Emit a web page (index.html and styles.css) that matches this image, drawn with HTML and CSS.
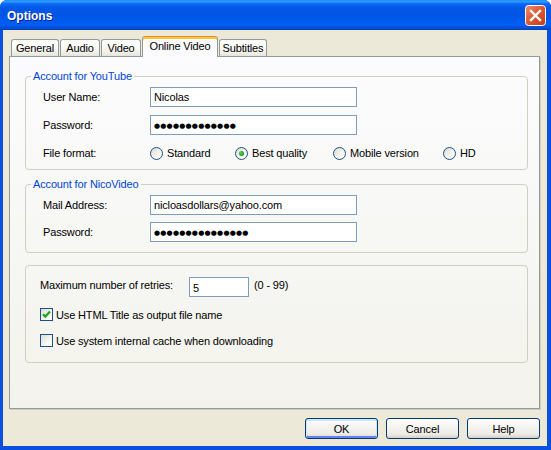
FILE: index.html
```html
<!DOCTYPE html>
<html>
<head>
<meta charset="utf-8">
<title>Options</title>
<link rel="stylesheet" href="styles.css">
</head>
<body>
<div class="window">
  <div class="titlebar">
    <span class="title">Options</span>
    <span class="close" aria-label="Close">
      <svg width="21" height="21" viewBox="0 0 21 21">
        <defs>
          <linearGradient id="cg" x1="0" y1="0" x2="1" y2="1">
            <stop offset="0" stop-color="#F08E70"/>
            <stop offset="0.45" stop-color="#E15A36"/>
            <stop offset="1" stop-color="#C2391A"/>
          </linearGradient>
        </defs>
        <rect x="0.5" y="0.5" width="20" height="20" rx="3" fill="url(#cg)" stroke="#ffffff"/>
        <path d="M6 6 L15 15 M15 6 L6 15" stroke="#ffffff" stroke-width="2.4" stroke-linecap="square"/>
      </svg>
    </span>
  </div>
  <div class="frame">
    <div class="tabs">
      <div class="tab">General</div>
      <div class="tab">Audio</div>
      <div class="tab">Video</div>
      <div class="tab active">Online Video</div>
      <div class="tab">Subtitles</div>
    </div>
    <div class="panel">
      <fieldset class="group g1">
        <legend>Account for YouTube</legend>
        <div class="form">
          <label class="lbl">User Name:</label>
          <div class="field">Nicolas</div>
          <label class="lbl">Password:</label>
          <div class="field pw">●●●●●●●●●●●●●</div>
          <label class="lbl">File format:</label>
          <div class="radios">
            <span class="radio"><i class="rb"></i>Standard</span>
            <span class="radio"><i class="rb on"></i>Best quality</span>
            <span class="radio"><i class="rb"></i>Mobile version</span>
            <span class="radio"><i class="rb"></i>HD</span>
          </div>
        </div>
      </fieldset>
      <fieldset class="group g2">
        <legend>Account for NicoVideo</legend>
        <div class="form">
          <label class="lbl">Mail Address:</label>
          <div class="field">nicloasdollars@yahoo.com</div>
          <label class="lbl">Password:</label>
          <div class="field pw">●●●●●●●●●●●●●●●</div>
        </div>
      </fieldset>
      <fieldset class="group g3">
        <div class="retries">
          <label class="rlbl">Maximum number of retries:</label>
          <div class="field small">5</div>
          <span class="range">(0 - 99)</span>
        </div>
        <div class="check">
          <i class="cb"><svg width="11" height="11" viewBox="0 0 11 11"><path d="M2 5.2 L4.3 7.6 L9 2.6" fill="none" stroke="#21A121" stroke-width="2.2"/></svg></i>
          <span>Use HTML Title as output file name</span>
        </div>
        <div class="check">
          <i class="cb"></i>
          <span>Use system internal cache when downloading</span>
        </div>
      </fieldset>
    </div>
    <div class="buttons">
      <button class="btn default">OK</button>
      <button class="btn">Cancel</button>
      <button class="btn">Help</button>
    </div>
  </div>
</div>
</body>
</html>
```
FILE: styles.css
```css
* { box-sizing: border-box; }
html, body { margin: 0; padding: 0; background: #ffffff; }
body {
  width: 551px;
  height: 450px;
  overflow: hidden;
  font-family: "Liberation Sans", Arial, sans-serif;
  font-size: 11px;
  letter-spacing: -0.15px;
  color: #000;
}
.window {
  width: 551px;
  height: 450px;
  display: flex;
  flex-direction: column;
  border-radius: 7px 7px 0 0;
  overflow: hidden;
  background: #0B4FE0;
}
.titlebar {
  height: 30px;
  flex: none;
  display: flex;
  align-items: center;
  justify-content: space-between;
  padding: 0 5px 0 7px;
  background: linear-gradient(180deg, #0997FF 0%, #3D95FF 6%, #0A6CF8 12%, #0458E8 24%, #0055E5 50%, #005AF0 70%, #0260F4 82%, #0050DA 92%, #0040B8 100%);
}
.title {
  color: #ffffff;
  font-weight: bold;
  font-size: 12px;
  letter-spacing: 0;
  text-shadow: 1px 1px 0 #0A1E8A;
  margin-top: 1px;
}
.close {
  width: 21px;
  height: 21px;
  display: block;
  margin-top: 1px;
}
.close svg { display: block; }
.frame {
  flex: 1;
  display: flex;
  flex-direction: column;
  background: #ECE9D8;
  border-style: solid;
  border-color: #0B4FE0;
  border-width: 0 4px 4px 3px;
  padding: 6px 7px 0 6px;
}
.tabs {
  height: 20px;
  display: grid;
  grid-template-columns: 48px 40px 40px 76px 48px;
  column-gap: 1px;
  align-items: end;
  padding-left: 2px;
  position: relative;
  z-index: 1;
}
.tab {
  height: 17px;
  border: 1px solid #919B9C;
  border-bottom: none;
  border-radius: 3px 3px 0 0;
  background: linear-gradient(180deg, #FFFFFF 0%, #FBFBF9 40%, #EFEEE8 80%, #E6E4DA 100%);
  display: flex;
  align-items: center;
  justify-content: center;
  white-space: nowrap;
  padding-bottom: 1px;
}
.tab.active {
  height: 21px;
  margin-bottom: -1px;
  background: #FCFCFE;
  border-top: 1px solid #E68B2C;
  box-shadow: inset 0 2px 0 #FFC83C;
  padding-top: 2px;
  padding-bottom: 4px;
}
.panel {
  height: 353px;
  flex: none;
  border: 1px solid #919B9C;
  box-shadow: 1px 1px 0 #D0CEC0;
  background: linear-gradient(180deg, #FCFCFE 0%, #F7F7F4 50%, #F3F2EC 100%);
  padding: 13px 11px 0 15px;
  display: flex;
  flex-direction: column;
}
.group {
  margin: 0;
  border: 1px solid #D0D0BF;
  border-radius: 4px;
  padding: 4px 0 6px 0;
  min-width: 0;
}
.group legend {
  margin-left: 5px;
  padding: 0 2px;
  color: #0046D5;
  line-height: 13px;
  font-size: 11px;
}
.g2 { margin-top: 8px; padding-bottom: 10px; }
.g3 { margin-top: 12px; padding: 11px 0 13px 14px; }
.form {
  display: grid;
  grid-template-columns: 107px 1fr;
  grid-auto-rows: 20px;
  row-gap: 8px;
  align-items: center;
  padding-left: 17px;
}
.g2 .form { row-gap: 7px; }
.lbl { white-space: nowrap; }
.field {
  width: 207px;
  height: 20px;
  border: 1px solid #7F9DB9;
  background: #ffffff;
  padding: 0 3px;
  display: flex;
  align-items: center;
  white-space: nowrap;
  overflow: hidden;
}
.pw {
  font-family: "DejaVu Sans", sans-serif;
  font-size: 7px;
  letter-spacing: 0.2px;
  padding-top: 1px;
}
.radios {
  display: grid;
  grid-template-columns: 85px 98px 110px auto;
  align-items: center;
}
.radio {
  display: flex;
  align-items: center;
  gap: 4px;
  white-space: nowrap;
}
.rb {
  width: 13px;
  height: 13px;
  border-radius: 50%;
  border: 1px solid #1C5180;
  background: linear-gradient(135deg, #DCD9D0 0%, #F2F1EC 50%, #FFFFFF 100%);
  display: flex;
  align-items: center;
  justify-content: center;
  flex: none;
}
.rb.on::after {
  content: "";
  width: 5px;
  height: 5px;
  border-radius: 50%;
  background: radial-gradient(circle at 40% 40%, #62D15C 0%, #21A121 60%, #1B8A1B 100%);
}
.retries {
  display: flex;
  align-items: center;
  height: 20px;
}
.rlbl { width: 149px; white-space: nowrap; margin-top: -4px; }
.field.small { width: 60px; padding-top: 1px; }
.range { margin-left: 5px; margin-top: -4px; }
.check {
  display: flex;
  align-items: center;
  gap: 3px;
  height: 17px;
  margin-top: 9px;
}
.cb {
  width: 13px;
  height: 13px;
  border: 1px solid #1C5180;
  background: linear-gradient(135deg, #DCDCD7 0%, #F3F3EF 55%, #FFFFFF 100%);
  display: flex;
  align-items: center;
  justify-content: center;
  flex: none;
}
.cb svg { display: block; }
.buttons {
  display: flex;
  justify-content: flex-end;
  gap: 8px;
  margin-top: 9px;
}
.btn {
  width: 73px;
  height: 21px;
  border: 1px solid #003C74;
  border-radius: 3px;
  background: linear-gradient(180deg, #FFFFFF 0%, #F5F4F0 40%, #ECEBE6 80%, #D6D0C5 100%);
  font-family: "Liberation Sans", Arial, sans-serif;
  font-size: 11px;
  letter-spacing: -0.15px;
  color: #000;
  padding: 0;
}
.btn.default {
  box-shadow: inset 0 1px 0 1px #CEE7FF, inset 0 -1px 0 1px #6982EE;
}
```
